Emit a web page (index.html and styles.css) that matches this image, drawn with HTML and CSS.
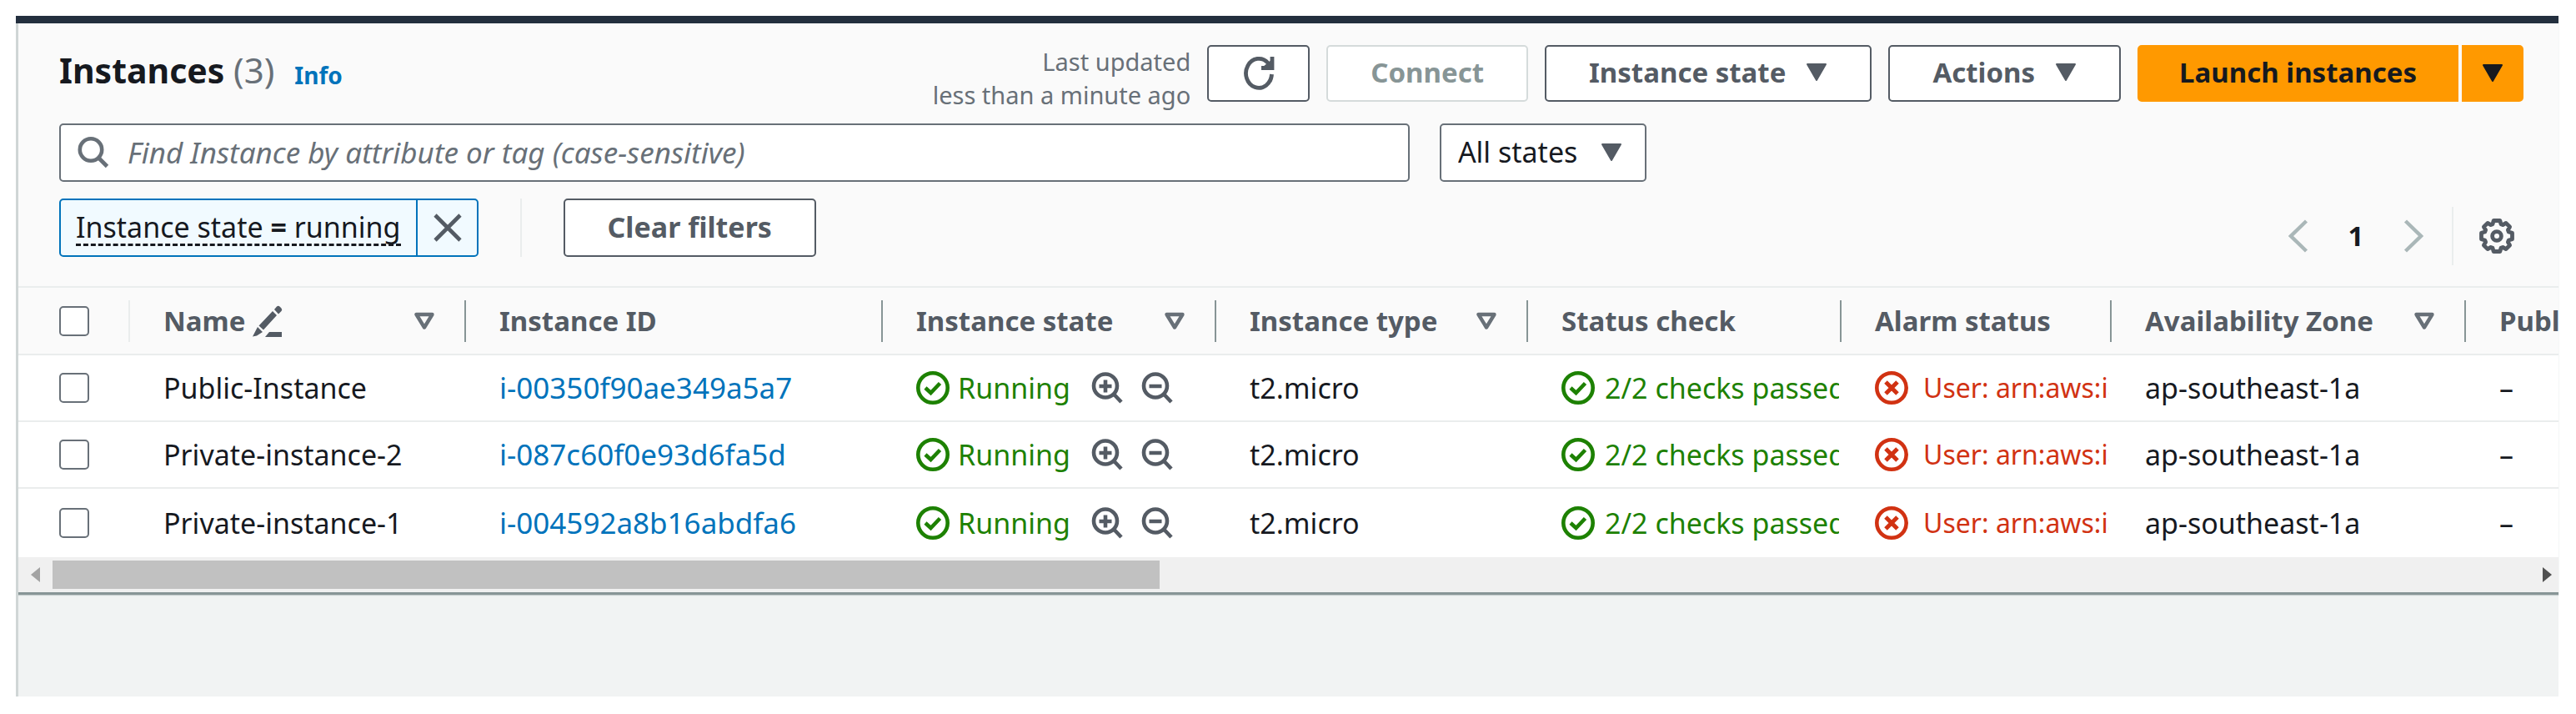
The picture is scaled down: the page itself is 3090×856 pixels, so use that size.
FILE: index.html
```html
<!DOCTYPE html>
<html lang="en">
<head>
<meta charset="utf-8">
<title>Instances</title>
<link rel="stylesheet" href="styles.css">
</head>
<body>
<svg class="sprite" aria-hidden="true">
  <symbol id="ok" viewBox="0 0 40 40"><circle cx="20" cy="20" r="17.7" fill="none" stroke="currentColor" stroke-width="4.6"/><path d="M11 20l6.500 6L28.500 14.500" fill="none" stroke="currentColor" stroke-width="4.600"/></symbol>
  <symbol id="err" viewBox="0 0 40 40"><circle cx="20" cy="20" r="17.7" fill="none" stroke="currentColor" stroke-width="4.600"/><path d="M13 13l14 14M27 13L13 27" fill="none" stroke="currentColor" stroke-width="5"/></symbol>
  <symbol id="zin" viewBox="0 0 38 38"><circle cx="17" cy="16.500" r="14" fill="none" stroke="currentColor" stroke-width="4.600"/><path d="M26.500 26l9.500 10M9.500 17h15M17 9.500v15" fill="none" stroke="currentColor" stroke-width="4.600"/></symbol>
  <symbol id="zout" viewBox="0 0 38 38"><circle cx="17" cy="16.500" r="14" fill="none" stroke="currentColor" stroke-width="4.600"/><path d="M26.500 26l9.500 10M9.500 17h15" fill="none" stroke="currentColor" stroke-width="4.600"/></symbol>
  <symbol id="caret" viewBox="0 0 26 22"><path d="M2 1h22L13 20z" fill="currentColor" stroke="currentColor" stroke-width="2" stroke-linejoin="round"/></symbol>
  <symbol id="sort" viewBox="0 0 26 22"><path d="M3.500 3h19L13 18.500z" fill="none" stroke="currentColor" stroke-width="4.400" stroke-linejoin="round"/></symbol>
</svg>
<main class="page">
  <section class="panel">
    <div class="head">
      <h1 class="title">Instances <span class="count">(3)</span></h1>
      <a class="info" href="#">Info</a>
      <div class="actions">
        <p class="updated">Last updated<br>less than a minute ago</p>
        <button class="btn btn-icon" aria-label="Refresh"><svg width="38" height="42" viewBox="0 0 38 42"><path d="M34.500 22A15.500 17.500 0 1 1 30 8.500L34 14" fill="none" stroke="currentColor" stroke-width="4.800"/><path d="M35 1v13.500H22" fill="none" stroke="currentColor" stroke-width="4.800"/><path d="M24 13l11-9v10z" fill="currentColor"/></svg></button>
        <button class="btn" disabled>Connect</button>
        <button class="btn">Instance state <svg class="caret"><use href="#caret"/></svg></button>
        <button class="btn">Actions <svg class="caret"><use href="#caret"/></svg></button>
        <div class="split">
          <button class="btn btn-primary btn-main">Launch instances</button>
          <button class="btn btn-primary btn-more" aria-label="More launch options"><svg class="caret"><use href="#caret"/></svg></button>
        </div>
      </div>
    </div>
    <div class="filters">
      <label class="search">
        <svg width="38" height="38" viewBox="0 0 38 38"><circle cx="16" cy="15.500" r="13.200" fill="none" stroke="currentColor" stroke-width="4.600"/><path d="M25 25l10.500 10.500" fill="none" stroke="currentColor" stroke-width="4.800"/></svg>
        <input type="text" aria-label="Find instance" placeholder="Find Instance by attribute or tag (case-sensitive)">
      </label>
      <div class="select">
        <select aria-label="States"><option>All states</option></select>
        <svg class="caret"><use href="#caret"/></svg>
      </div>
    </div>
    <div class="tools">
      <div class="tokens">
        <div class="chip">
          <button class="chip-text"><span>Instance state <b>=</b> running</span></button>
          <button class="chip-x" aria-label="Remove filter"><svg width="36" height="36" viewBox="0 0 36 36"><path d="M3 3l30 30M33 3L3 33" stroke="currentColor" stroke-width="4.600"/></svg></button>
        </div>
        <span class="rule"></span>
        <button class="btn btn-clear">Clear filters</button>
      </div>
      <nav class="pager" aria-label="Pages">
        <button class="flat dim" aria-label="Previous page"><svg width="24" height="40" viewBox="0 0 24 40"><path d="M21.500 2L3 20l18.500 18" fill="none" stroke="currentColor" stroke-width="4.400"/></svg></button>
        <button class="flat page-no">1</button>
        <button class="flat dim" aria-label="Next page"><svg width="24" height="40" viewBox="0 0 24 40"><path d="M2.500 2L21 20 2.500 38" fill="none" stroke="currentColor" stroke-width="4.400"/></svg></button>
        <span class="rule"></span>
        <button class="flat gear" aria-label="Preferences"><svg width="42" height="42" viewBox="-21 -21 42 42" fill="none" stroke="currentColor" stroke-width="4.800" stroke-linejoin="round"><path d="M-3.800-18.500H3.800L5-14.300 7.200-13.400 11-15.600 15.600-11 13.400-7.200 14.300-5 18.500-3.800V3.800L14.300 5 13.400 7.200 15.600 11 11 15.600 7.200 13.400 5 14.300 3.800 18.500H-3.800L-5 14.300-7.200 13.400-11 15.600-15.600 11-13.400 7.200-14.300 5-18.500 3.800V-3.800L-14.300-5-13.400-7.200-15.600-11-11-15.600-7.200-13.400-5-14.300z"/><circle r="5.400"/></svg></button>
      </nav>
    </div>
    <div class="scroller">
      <table class="grid">
        <colgroup><col class="c-check"><col class="c-name"><col class="c-id"><col class="c-state"><col class="c-type"><col class="c-status"><col class="c-alarm"><col class="c-zone"><col class="c-dns"></colgroup>
        <thead>
          <tr>
            <th class="pick light"><input type="checkbox" aria-label="Select all"></th>
            <th><div class="th">Name <svg class="pencil" width="38" height="38" viewBox="0 0 38 38"><path d="M8.500 24.500L25 7l5 5L14 29.500zM27 5l3-3.500q2-1.500 4 .500l1.500 1.500q1.500 2 0 3.500L32 10.500zM7 26l6 6-7 4.500-5 1z" fill="currentColor"/><path d="M16 38l5-6h15v6z" fill="currentColor"/></svg><svg class="sort"><use href="#sort"/></svg></div></th>
            <th><div class="th">Instance ID</div></th>
            <th><div class="th">Instance state<svg class="sort"><use href="#sort"/></svg></div></th>
            <th><div class="th">Instance type<svg class="sort"><use href="#sort"/></svg></div></th>
            <th><div class="th">Status check</div></th>
            <th><div class="th">Alarm status</div></th>
            <th><div class="th">Availability Zone<svg class="sort"><use href="#sort"/></svg></div></th>
            <th><div class="th">Public IPv4 DNS</div></th>
          </tr>
        </thead>
        <tbody>
          <tr>
            <td class="pick"><input type="checkbox" aria-label="Select Public-Instance"></td>
            <td>Public-Instance</td>
            <td><a href="#">i-00350f90ae349a5a7</a></td>
            <td><div class="cell ok"><svg class="st"><use href="#ok"/></svg>Running<button class="flat zoom" aria-label="Include state"><svg><use href="#zin"/></svg></button><button class="flat zoom" aria-label="Exclude state"><svg><use href="#zout"/></svg></button></div></td>
            <td>t2.micro</td>
            <td><div class="cell ok wide"><svg class="st"><use href="#ok"/></svg>2/2 checks passed</div></td>
            <td><div class="cell err"><svg class="st"><use href="#err"/></svg>User: arn:aws:iam</div></td>
            <td>ap-southeast-1a</td>
            <td>–</td>
          </tr>
          <tr>
            <td class="pick"><input type="checkbox" aria-label="Select Private-instance-2"></td>
            <td>Private-instance-2</td>
            <td><a href="#">i-087c60f0e93d6fa5d</a></td>
            <td><div class="cell ok"><svg class="st"><use href="#ok"/></svg>Running<button class="flat zoom" aria-label="Include state"><svg><use href="#zin"/></svg></button><button class="flat zoom" aria-label="Exclude state"><svg><use href="#zout"/></svg></button></div></td>
            <td>t2.micro</td>
            <td><div class="cell ok wide"><svg class="st"><use href="#ok"/></svg>2/2 checks passed</div></td>
            <td><div class="cell err"><svg class="st"><use href="#err"/></svg>User: arn:aws:iam</div></td>
            <td>ap-southeast-1a</td>
            <td>–</td>
          </tr>
          <tr>
            <td class="pick"><input type="checkbox" aria-label="Select Private-instance-1"></td>
            <td>Private-instance-1</td>
            <td><a href="#">i-004592a8b16abdfa6</a></td>
            <td><div class="cell ok"><svg class="st"><use href="#ok"/></svg>Running<button class="flat zoom" aria-label="Include state"><svg><use href="#zin"/></svg></button><button class="flat zoom" aria-label="Exclude state"><svg><use href="#zout"/></svg></button></div></td>
            <td>t2.micro</td>
            <td><div class="cell ok wide"><svg class="st"><use href="#ok"/></svg>2/2 checks passed</div></td>
            <td><div class="cell err"><svg class="st"><use href="#err"/></svg>User: arn:aws:iam</div></td>
            <td>ap-southeast-1a</td>
            <td>–</td>
          </tr>
        </tbody>
      </table>
    </div>
    <div class="bar">
      <svg class="left" width="12" height="18" viewBox="0 0 12 18"><path d="M11 0v18L0 9z" fill="currentColor"/></svg>
      <div class="track"><div class="thumb"></div></div>
      <svg width="12" height="18" viewBox="0 0 12 18"><path d="M1 0v18L12 9z" fill="currentColor"/></svg>
    </div>
  </section>
</main>
</body>
</html>
```
FILE: styles.css
```css
* { box-sizing: border-box; }
body {
  margin: 0;
  min-height: 100vh;
  padding: 19px 21px 21px 19px;
  background: #fff;
  color: #16191f;
  font: 34px/46px "Noto Sans", sans-serif;
  display: flex;
}
button, input, select { font: inherit; color: inherit; margin: 0; }
svg { display: block; flex: none; }
.sprite { position: absolute; width: 0; height: 0; }
.page {
  flex: 1;
  min-width: 0;
  background: #f1f3f3;
  border-top: 9px solid #232f3e;
  box-shadow: inset 4px 0 0 -1px #d0d6d6;
}
.panel {
  margin-left: 3px;
  background: #fafafa;
  border-bottom: 3px solid #879596;
  box-shadow: 0 1px 1px #c5cccc;
}
.head { display: flex; align-items: flex-start; padding: 26px 42px 0 49px; }
.title { margin: 0; font-size: 41px; line-height: 60px; font-weight: 700; }
.count { font-size: 42px; font-weight: 400; color: #687078; }
.info { margin-left: 24px; font-size: 28px; font-weight: 700; line-height: 72px; color: #0073bb; text-decoration: none; }
.actions { display: flex; gap: 20px; margin-left: auto; }
.updated { margin: 0; font-size: 29px; line-height: 40px; text-align: right; color: #687078; }
.btn {
  display: flex;
  align-items: center;
  justify-content: center;
  height: 68px;
  padding: 0 51px 2px;
  border: 2px solid #545b64;
  border-radius: 5px;
  background: #fff;
  color: #545b64;
  font-size: 33px;
  font-weight: 700;
  white-space: nowrap;
}
.btn:disabled { border-color: #d5dbdb; color: #879596; }
.btn-icon { width: 123px; padding: 0; }
.caret { width: 26px; height: 22px; margin-left: 24px; }
.split { display: flex; gap: 4px; }
.btn-primary { background: #f90; border-color: #f90; color: #16191f; }
.btn-main { padding: 0 48px 2px; border-radius: 5px 0 0 5px; }
.btn-more { width: 74px; padding: 0; border-radius: 0 5px 5px 0; }
.btn-more .caret { margin: 0; }
.filters { display: flex; gap: 36px; padding: 14px 42px 0 49px; }
.search {
  display: flex;
  align-items: center;
  gap: 22px;
  width: 54.8%;
  height: 70px;
  padding: 0 20px;
  border: 2px solid #687078;
  border-radius: 5px;
  background: #fff;
  color: #687078;
}
.search input { flex: 1; min-width: 0; border: 0; padding: 0; outline: 0; background: none; font-size: 35px; }
.search input::placeholder { color: #687078; font-style: italic; opacity: 1; }
.select { display: grid; align-items: center; width: 248px; }
.select > * { grid-area: 1 / 1; }
.select select { appearance: none; width: 100%; height: 70px; padding: 0 20px 2px; border: 2px solid #687078; border-radius: 5px; background: #fff; }
.select .caret { justify-self: end; margin-right: 29px; color: #545b64; pointer-events: none; }
.tools { display: flex; justify-content: space-between; padding: 20px 43px 25px 49px; }
.tokens { display: flex; height: 70px; margin-bottom: 10px; }
.chip { display: flex; border: 2px solid #0073bb; border-radius: 5px; background: #f1faff; }
.chip button { border: 0; background: none; padding: 0 18px; }
.chip .chip-x { width: 73px; border-left: 2px solid #0073bb; color: #545b64; }
.chip-text span { display: block; line-height: 40px; border-bottom: 3px dashed #16191f; }
.rule { width: 2px; height: 70px; background: #eaeded; }
.tokens .rule { margin: 0 50px; }
.btn-clear { height: 70px; font-size: 34px; }
.pager { display: flex; align-items: center; align-self: flex-end; height: 70px; }
.flat { display: flex; align-items: center; justify-content: center; border: 0; background: none; padding: 0; }
.dim { color: #aab7b8; width: 24px; }
.page-no { width: 114px; font-size: 33px; font-weight: 700; }
.pager .rule { margin: 0 31px 0 34px; }
.gear { width: 42px; margin-right: 10px; color: #545b64; }
.scroller { overflow: hidden; background: #fff; }
.grid { table-layout: fixed; width: 3250px; border-collapse: separate; border-spacing: 0; }
.c-check { width: 134px; } .c-name { width: 403px; } .c-id { width: 500px; }
.c-state { width: 400px; } .c-type { width: 374px; } .c-status { width: 376px; }
.c-alarm { width: 324px; } .c-zone { width: 425px; } .c-dns { width: 314px; }
.grid th, .grid td { padding: 0 0 0 40px; text-align: left; white-space: nowrap; overflow: hidden; }
.grid th { height: 83px; background: #fafafa; border: solid #eaeded; border-width: 2px 0; color: #545b64; font-size: 33px; font-weight: 700; }
.grid td { height: 80px; padding-right: 3px; border-bottom: 2px solid #eaeded; }
.grid tbody tr:last-child td { height: 82px; border-bottom: 0; }
.grid .pick { padding-left: 49px; }
.th { display: flex; align-items: center; height: 50px; border-right: 2px solid #879596; padding-right: 35px; }
.pencil { margin-left: 8px; }
.sort { width: 26px; height: 22px; margin-left: auto; color: #687078; }
.pick input { appearance: none; display: block; width: 36px; height: 36px; border: 2px solid #687078; border-radius: 5px; background: #fff; }
.light { background: linear-gradient(#eaeded, #eaeded) right center / 2px 50px no-repeat #fafafa !important; }
.grid a { font-size: 35px; color: #0073bb; text-decoration: none; }
.cell { display: flex; align-items: center; gap: 10px; overflow: hidden; }
.st { width: 40px; height: 40px; }
.ok { color: #1d8102; }
.err { color: #d13212; gap: 18px; font-size: 32px; }
.wide { gap: 12px; }
.zoom { color: #545b64; margin-left: 12px; }
.zoom svg { width: 38px; height: 38px; }
.zoom:first-of-type { margin-left: 15px; }
.bar { display: flex; align-items: center; gap: 14px; height: 42px; padding: 0 8px 0 15px; background: #f0f0f0; color: #505050; }
.left { color: #a3a3a3; }
.track { flex: 1; }
.thumb { width: 44.7%; height: 34px; background: #c1c1c1; }
```
